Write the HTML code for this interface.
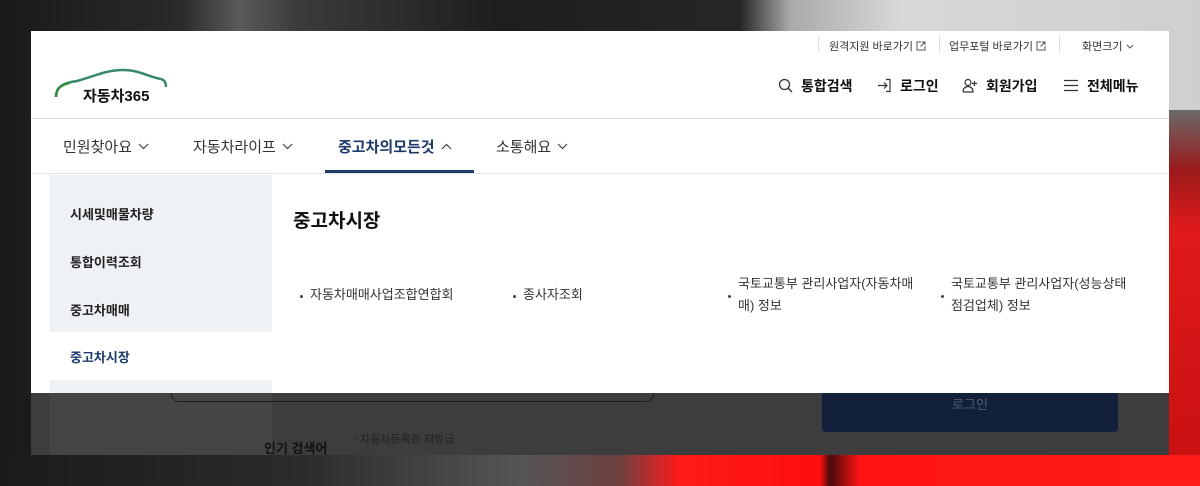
<!DOCTYPE html>
<html><head><meta charset="utf-8"><style>
*{margin:0;padding:0;box-sizing:border-box}
body{width:1200px;height:486px;overflow:hidden;position:relative;font-family:"Liberation Sans","Noto Sans CJK KR",sans-serif;color:#222;
background:linear-gradient(90deg,#1a1a1a 0,#2a2a2a 180px,#5a5a58 240px,#3a3a3a 300px,#1e1e1e 500px,#262626 740px,#a9a9a9 790px,#d8d8d8 900px,#cfcfcf 1200px);}
.a{position:absolute}
.red{left:1169px;top:110px;width:31px;height:376px;background:linear-gradient(180deg,#6a6a6a 0,#9b1a1a 60px,#e01a1a 120px,#c81010 100%)}
.bot{left:0;top:455px;width:1200px;height:31px;background:linear-gradient(90deg,#1b1b1b 0,#2b2b2b 300px,#555 520px,#6e4040 620px,#ff1a1a 680px,#ff0d0d 820px,#4a0a0a 830px,#ff1414 860px,#ff1a1a 1200px)}
.panel{left:31px;top:31px;width:1138px;height:362px;background:#fff}
.ov{left:31px;top:393px;width:1138px;height:62px;background:#3d3d3d;overflow:hidden}
.nav{font-size:15px;color:#333;white-space:nowrap}
.nav svg{vertical-align:2px;margin-left:6px}
.sb{left:19px;top:144px;width:222px;height:218px;background:#eef1f6}
.si{position:absolute;left:20px;font-size:13px;font-weight:bold;color:#222}
.li{position:absolute;font-size:13px;color:#333;line-height:22px}
.dot{position:absolute;width:3px;height:3px;background:#444;border-radius:50%}
.act{position:absolute;top:45px;font-size:14px;font-weight:bold;color:#111;white-space:nowrap}
.ut{position:absolute;top:7px;font-size:11px;color:#333;white-space:nowrap}
.sep{position:absolute;top:5px;width:1px;height:16px;background:#ddd}
</style></head><body>
<div class="a red"></div><div class="a bot"></div>
<div class="a panel">
 <div class="sep" style="left:787px"></div>
 <div class="ut" style="left:798px">원격지원 바로가기 <svg width="10" height="10" style="vertical-align:-1px"><path d="M5 1H1v8h8V5M6 1h3v3M9 1L4.5 5.5" fill="none" stroke="#555"/></svg></div>
 <div class="sep" style="left:908px"></div>
 <div class="ut" style="left:918px">업무포털 바로가기 <svg width="10" height="10" style="vertical-align:-1px"><path d="M5 1H1v8h8V5M6 1h3v3M9 1L4.5 5.5" fill="none" stroke="#555"/></svg></div>
 <div class="sep" style="left:1028px"></div>
 <div class="ut" style="left:1051px">화면크기 <svg width="8" height="6"><path d="M1 1l3 3 3-3" fill="none" stroke="#555"/></svg></div>
 <!-- logo -->
 <svg class="a" style="left:22px;top:36px" width="114" height="32"><path d="M3 30 C3 20 10 16 24 14 C40 10 52 3 70 3 C86 3 96 10 108 12 C112 13 113 16 113 20" fill="none" stroke="#3a8a6a" stroke-width="2.5"/><path d="M3 30 C3 22 7 18 16 16" stroke="#2f8a3a" stroke-width="2.5" fill="none"/></svg>
 <div class="a" style="left:52px;top:54px;font-size:15px;font-weight:bold;color:#111">자동차365</div>
 <!-- right actions -->
 <svg class="a" style="left:747px;top:47px" width="15" height="15"><circle cx="6.5" cy="6.5" r="5" fill="none" stroke="#333" stroke-width="1.3"/><path d="M10 10l4 4" stroke="#333" stroke-width="1.3"/></svg>
 <div class="act" style="left:770px">통합검색</div>
 <svg class="a" style="left:846px;top:47px" width="15" height="15"><path d="M1 7.5h9M7 4.5l3 3-3 3M9 1.5h4v12H9" fill="none" stroke="#333" stroke-width="1.2"/></svg>
 <div class="act" style="left:869px">로그인</div>
 <svg class="a" style="left:931px;top:47px" width="16" height="15"><circle cx="6" cy="4.5" r="3" fill="none" stroke="#333" stroke-width="1.2"/><path d="M1 14c0-3.5 2.3-5.5 5-5.5s5 2 5 5.5H1M12.5 3v5M10 5.5h5" fill="none" stroke="#333" stroke-width="1.2"/></svg>
 <div class="act" style="left:955px">회원가입</div>
 <svg class="a" style="left:1033px;top:48px" width="14" height="13"><path d="M0 1.5h14M0 6.5h14M0 11.5h14" stroke="#333" stroke-width="1.2"/></svg>
 <div class="act" style="left:1056px">전체메뉴</div>
 <div class="a" style="left:0;top:87px;width:1138px;height:1px;background:#ddd"></div>
 <div class="a nav" style="left:32px;top:105px">민원찾아요<svg width="11" height="7"><path d="M1 1l4.5 4.5L10 1" fill="none" stroke="#444" stroke-width="1.2"/></svg></div>
 <div class="a nav" style="left:162px;top:105px">자동차라이프<svg width="11" height="7"><path d="M1 1l4.5 4.5L10 1" fill="none" stroke="#444" stroke-width="1.2"/></svg></div>
 <div class="a nav" style="left:307px;top:105px;color:#1d3a6b;font-weight:bold">중고차의모든것<svg width="11" height="7"><path d="M1 6l4.5-4.5L10 6" fill="none" stroke="#444" stroke-width="1.2"/></svg></div>
 <div class="a nav" style="left:465px;top:105px">소통해요<svg width="11" height="7"><path d="M1 1l4.5 4.5L10 1" fill="none" stroke="#444" stroke-width="1.2"/></svg></div>
 <div class="a" style="left:294px;top:139px;width:149px;height:3px;background:#1d3a6b"></div>
 <div class="a" style="left:0;top:142px;width:1138px;height:1px;background:#e5e5e5"></div>
 <div class="a sb">
  <div class="si" style="top:29px">시세및매물차량</div>
  <div class="si" style="top:77px">통합이력조회</div>
  <div class="si" style="top:125px">중고차매매</div>
  <div style="position:absolute;left:0;top:157px;width:222px;height:48px;background:#fff"></div>
  <div class="si" style="top:172px;color:#1d3a6b">중고차시장</div>
 </div>
 <div class="a" style="left:262px;top:175px;font-size:19px;font-weight:bold;color:#111">중고차시장</div>
 <div class="dot" style="left:269px;top:264px"></div><div class="li" style="left:279px;top:253px">자동차매매사업조합연합회</div>
 <div class="dot" style="left:482px;top:264px"></div><div class="li" style="left:492px;top:253px">종사자조회</div>
 <div class="dot" style="left:697px;top:264px"></div><div class="li" style="left:707px;top:242px">국토교통부 관리사업자(자동차매<br>매) 정보</div>
 <div class="dot" style="left:910px;top:264px"></div><div class="li" style="left:920px;top:242px">국토교통부 관리사업자(성능상태<br>점검업체) 정보</div>
</div>
<div class="a ov">
 <div class="a" style="left:19px;top:0;width:222px;height:62px;background:#444546"></div>
 <div class="a" style="left:140px;top:-10px;width:483px;height:19px;border:1px solid #1e1e1e;border-radius:0 0 8px 8px"></div>
 <div class="a" style="left:791px;top:0;width:296px;height:39px;background:#13203c;border-radius:0 0 4px 4px;color:#4e5c78;font-size:13px;text-align:center;line-height:24px">로그인</div>
 <div class="a" style="left:233px;top:45px;font-size:13px;font-weight:bold;color:#111">인기 검색어</div>
 <div class="a" style="left:322px;top:38px;font-size:11px;color:#222">⁷ 자동차등록증 재발급</div>
</div>
</body></html>
